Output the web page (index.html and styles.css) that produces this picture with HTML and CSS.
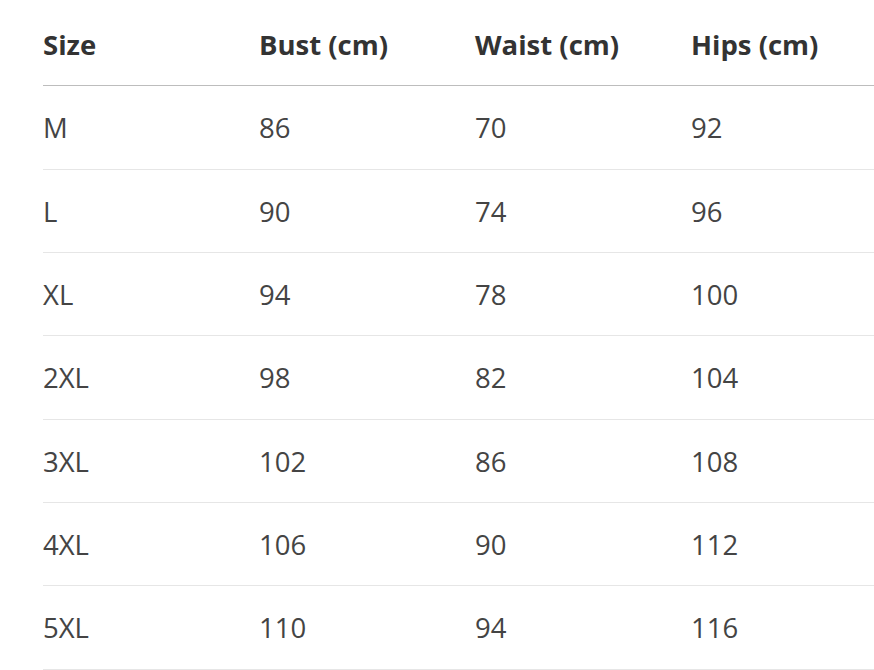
FILE: index.html
```html
<!DOCTYPE html>
<html>
<head>
<meta charset="utf-8">
<link rel="stylesheet" href="styles.css">
</head>
<body>
<div class="table">
  <div class="row head"><div>Size</div><div>Bust (cm)</div><div>Waist (cm)</div><div>Hips (cm)</div></div>
  <div class="row"><div>M</div><div>86</div><div>70</div><div>92</div></div>
  <div class="row"><div>L</div><div>90</div><div>74</div><div>96</div></div>
  <div class="row"><div>XL</div><div>94</div><div>78</div><div>100</div></div>
  <div class="row"><div>2XL</div><div>98</div><div>82</div><div>104</div></div>
  <div class="row"><div>3XL</div><div>102</div><div>86</div><div>108</div></div>
  <div class="row"><div>4XL</div><div>106</div><div>90</div><div>112</div></div>
  <div class="row"><div>5XL</div><div>110</div><div>94</div><div>116</div></div>
</div>
</body>
</html>
```
FILE: styles.css
```css
html, body {
  margin: 0;
  padding: 0;
  background: #fff;
  overflow: hidden;
}
body {
  font-family: "Open Sans", "Noto Sans", sans-serif;
  font-size: 27.5px;
  color: #444;
}
.table {
  margin-left: 43px;
  padding-top: 3px;
  width: 864px;
}
.row {
  display: grid;
  grid-template-columns: 216px 216px 216px 216px;
  height: 82.33px;
  align-items: center;
  border-bottom: 1px solid #e6e6e6;
}
.row > div {
  padding-left: 0;
  padding-top: 1px;
}
.head {
  border-bottom-color: #bdbdbd;
  font-weight: 700;
  color: #333;
}
```
